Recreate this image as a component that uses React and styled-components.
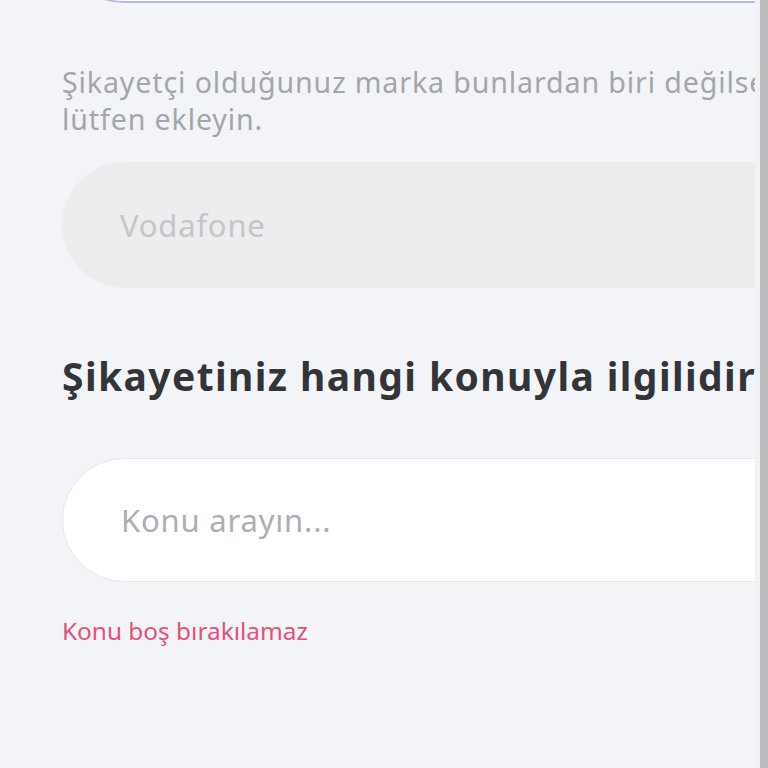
import styled, { createGlobalStyle } from 'styled-components'

const GlobalStyle = createGlobalStyle`
  html, body {
    margin: 0;
    padding: 0;
    background: #f3f4f8;
    overflow: hidden;
  }

  body {
    font-family: 'Noto Sans', 'Open Sans', sans-serif;
  }
`

const StyledPage = styled.div`
  width: 768px;
  height: 768px;
  overflow: hidden;
  padding-left: 62px;
  box-sizing: border-box;
`

const StyledColumn = styled.div`
  width: 760px;
  display: flex;
  flex-direction: column;
`

const StyledField = styled.div`
  display: flex;
  align-items: center;
  flex-shrink: 0;
  box-sizing: border-box;
  height: ${ ({ height }) => height }px;
  margin-top: ${ ({ gap }) => gap || 0 }px;
  padding-left: 58px;
  border-radius: 999px;
  border: ${ ({ border }) => border || 'none' };
  background: ${ ({ bg }) => bg };
  color: ${ ({ color }) => color };
  font-size: 31px;
  letter-spacing: 0.8px;
`

const StyledHint = styled.p`
  margin: 60px 0 0;
  font-size: 28.6px;
  line-height: 37px;
  letter-spacing: 0.87px;
  color: #a4a5ab;
`

const StyledHeading = styled.h2`
  margin: 65px 0 0;
  font-size: 39px;
  line-height: 46px;
  font-weight: 700;
  letter-spacing: 1.4px;
  color: #333438;
  white-space: nowrap;
`

const StyledError = styled.div`
  margin-top: 32px;
  font-size: 24.4px;
  color: #e6517a;
`

const StyledScrollbar = styled.div`
  position: fixed;
  top: 0;
  right: 0;
  bottom: 0;
  width: 13px;
  display: flex;
  justify-content: flex-end;
  background: #f1f2f5;
`

const StyledThumb = styled.div`
  width: 8px;
  background: #bcbcbc;
`

const App = () => (
  <>
    <GlobalStyle />
    <StyledPage>
      <StyledColumn>
        <StyledField height={ 124 } gap={ -121 } bg='#ffffff' border='2px solid #b4b9e8' />

        <StyledHint>
          Şikayetçi olduğunuz marka bunlardan biri değilse lütfen ekleyin.
        </StyledHint>

        <StyledField height={ 126 } gap={ 25 } bg='#ededef' color='#c6c6c9'>
          Vodafone
        </StyledField>

        <StyledHeading>Şikayetiniz hangi konuyla ilgilidir?</StyledHeading>

        <StyledField height={ 124 } gap={ 59 } bg='#ffffff' color='#adaeb3' border='1px solid #e6e7ec'>
          Konu arayın...
        </StyledField>

        <StyledError>Konu boş bırakılamaz</StyledError>
      </StyledColumn>
    </StyledPage>
    <StyledScrollbar>
      <StyledThumb />
    </StyledScrollbar>
  </>
)

export default App
